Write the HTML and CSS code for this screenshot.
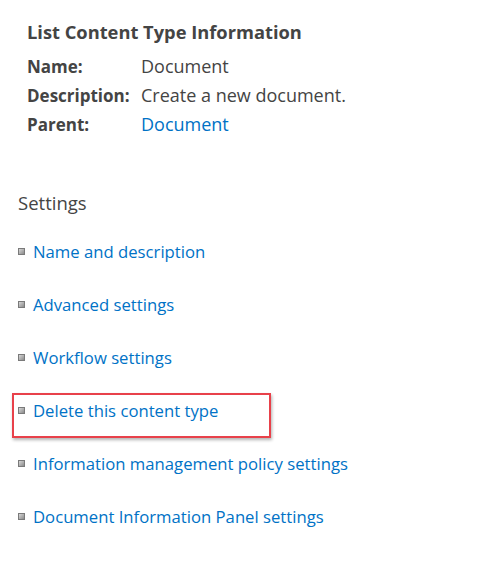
FILE: index.html
```html
<!DOCTYPE html>
<html>
<head>
<meta charset="utf-8">
<link rel="stylesheet" href="styles.css">
</head>
<body>
<div class="page">
  <section class="info">
    <h2 class="info-title">List Content Type Information</h2>
    <div class="info-grid">
      <div class="label">Name:</div><div class="value">Document</div>
      <div class="label">Description:</div><div class="value">Create a new document.</div>
      <div class="label">Parent:</div><div class="value"><a class="link" href="#">Document</a></div>
    </div>
  </section>
  <section class="settings">
    <h3 class="settings-title">Settings</h3>
    <ul class="settings-list">
      <li class="item"><span class="bullet"></span><a class="link" href="#">Name and description</a></li>
      <li class="item"><span class="bullet"></span><a class="link" href="#">Advanced settings</a></li>
      <li class="item"><span class="bullet"></span><a class="link" href="#">Workflow settings</a></li>
      <li class="item highlighted"><span class="bullet"></span><a class="link" href="#">Delete this content type</a></li>
      <li class="item"><span class="bullet"></span><a class="link" href="#">Information management policy settings</a></li>
      <li class="item"><span class="bullet"></span><a class="link" href="#">Document Information Panel settings</a></li>
    </ul>
  </section>
</div>
</body>
</html>
```
FILE: styles.css
```css
html, body {
  margin: 0;
  padding: 0;
  background: #ffffff;
}
body {
  font-family: "Open Sans", "Noto Sans", sans-serif;
  color: #444444;
  width: 500px;
  height: 572px;
  overflow: hidden;
}
.page {
  padding: 20px 0 0 18px;
}
.info {
  padding-left: 9px;
}
.info-title {
  margin: 0;
  font-size: 18.3px;
  font-weight: 700;
  line-height: 24px;
  color: #444444;
}
.info-grid {
  display: grid;
  grid-template-columns: 114px auto;
  margin-top: 8px;
  font-size: 18px;
  line-height: 29px;
}
.label {
  font-weight: 700;
  font-size: 17px;
}
.link {
  color: #0072c6;
  text-decoration: none;
}
.settings {
  margin-top: 52px;
}
.settings-title {
  margin: 0;
  font-size: 18.5px;
  font-weight: 400;
  line-height: 24px;
  color: #444444;
}
.settings-list {
  list-style: none;
  margin: 10px 0 0 0;
  padding: 0;
}
.item {
  display: flex;
  align-items: center;
  gap: 8px;
  height: 53px;
  font-size: 16.7px;
  line-height: 24px;
}
.bullet {
  width: 7px;
  height: 7px;
  box-sizing: border-box;
  border: 1px solid #7a7a7a;
  background: linear-gradient(135deg, #d8d8d8, #8a8a8a);
  flex: none;
}
.highlighted {
  position: relative;
}
.highlighted::after {
  content: "";
  position: absolute;
  left: -6px;
  top: 9px;
  width: 259px;
  height: 45px;
  box-sizing: border-box;
  border: 2px solid #e8414a;
  box-shadow: 1px 2px 3px rgba(0,0,0,0.3);
}
```
